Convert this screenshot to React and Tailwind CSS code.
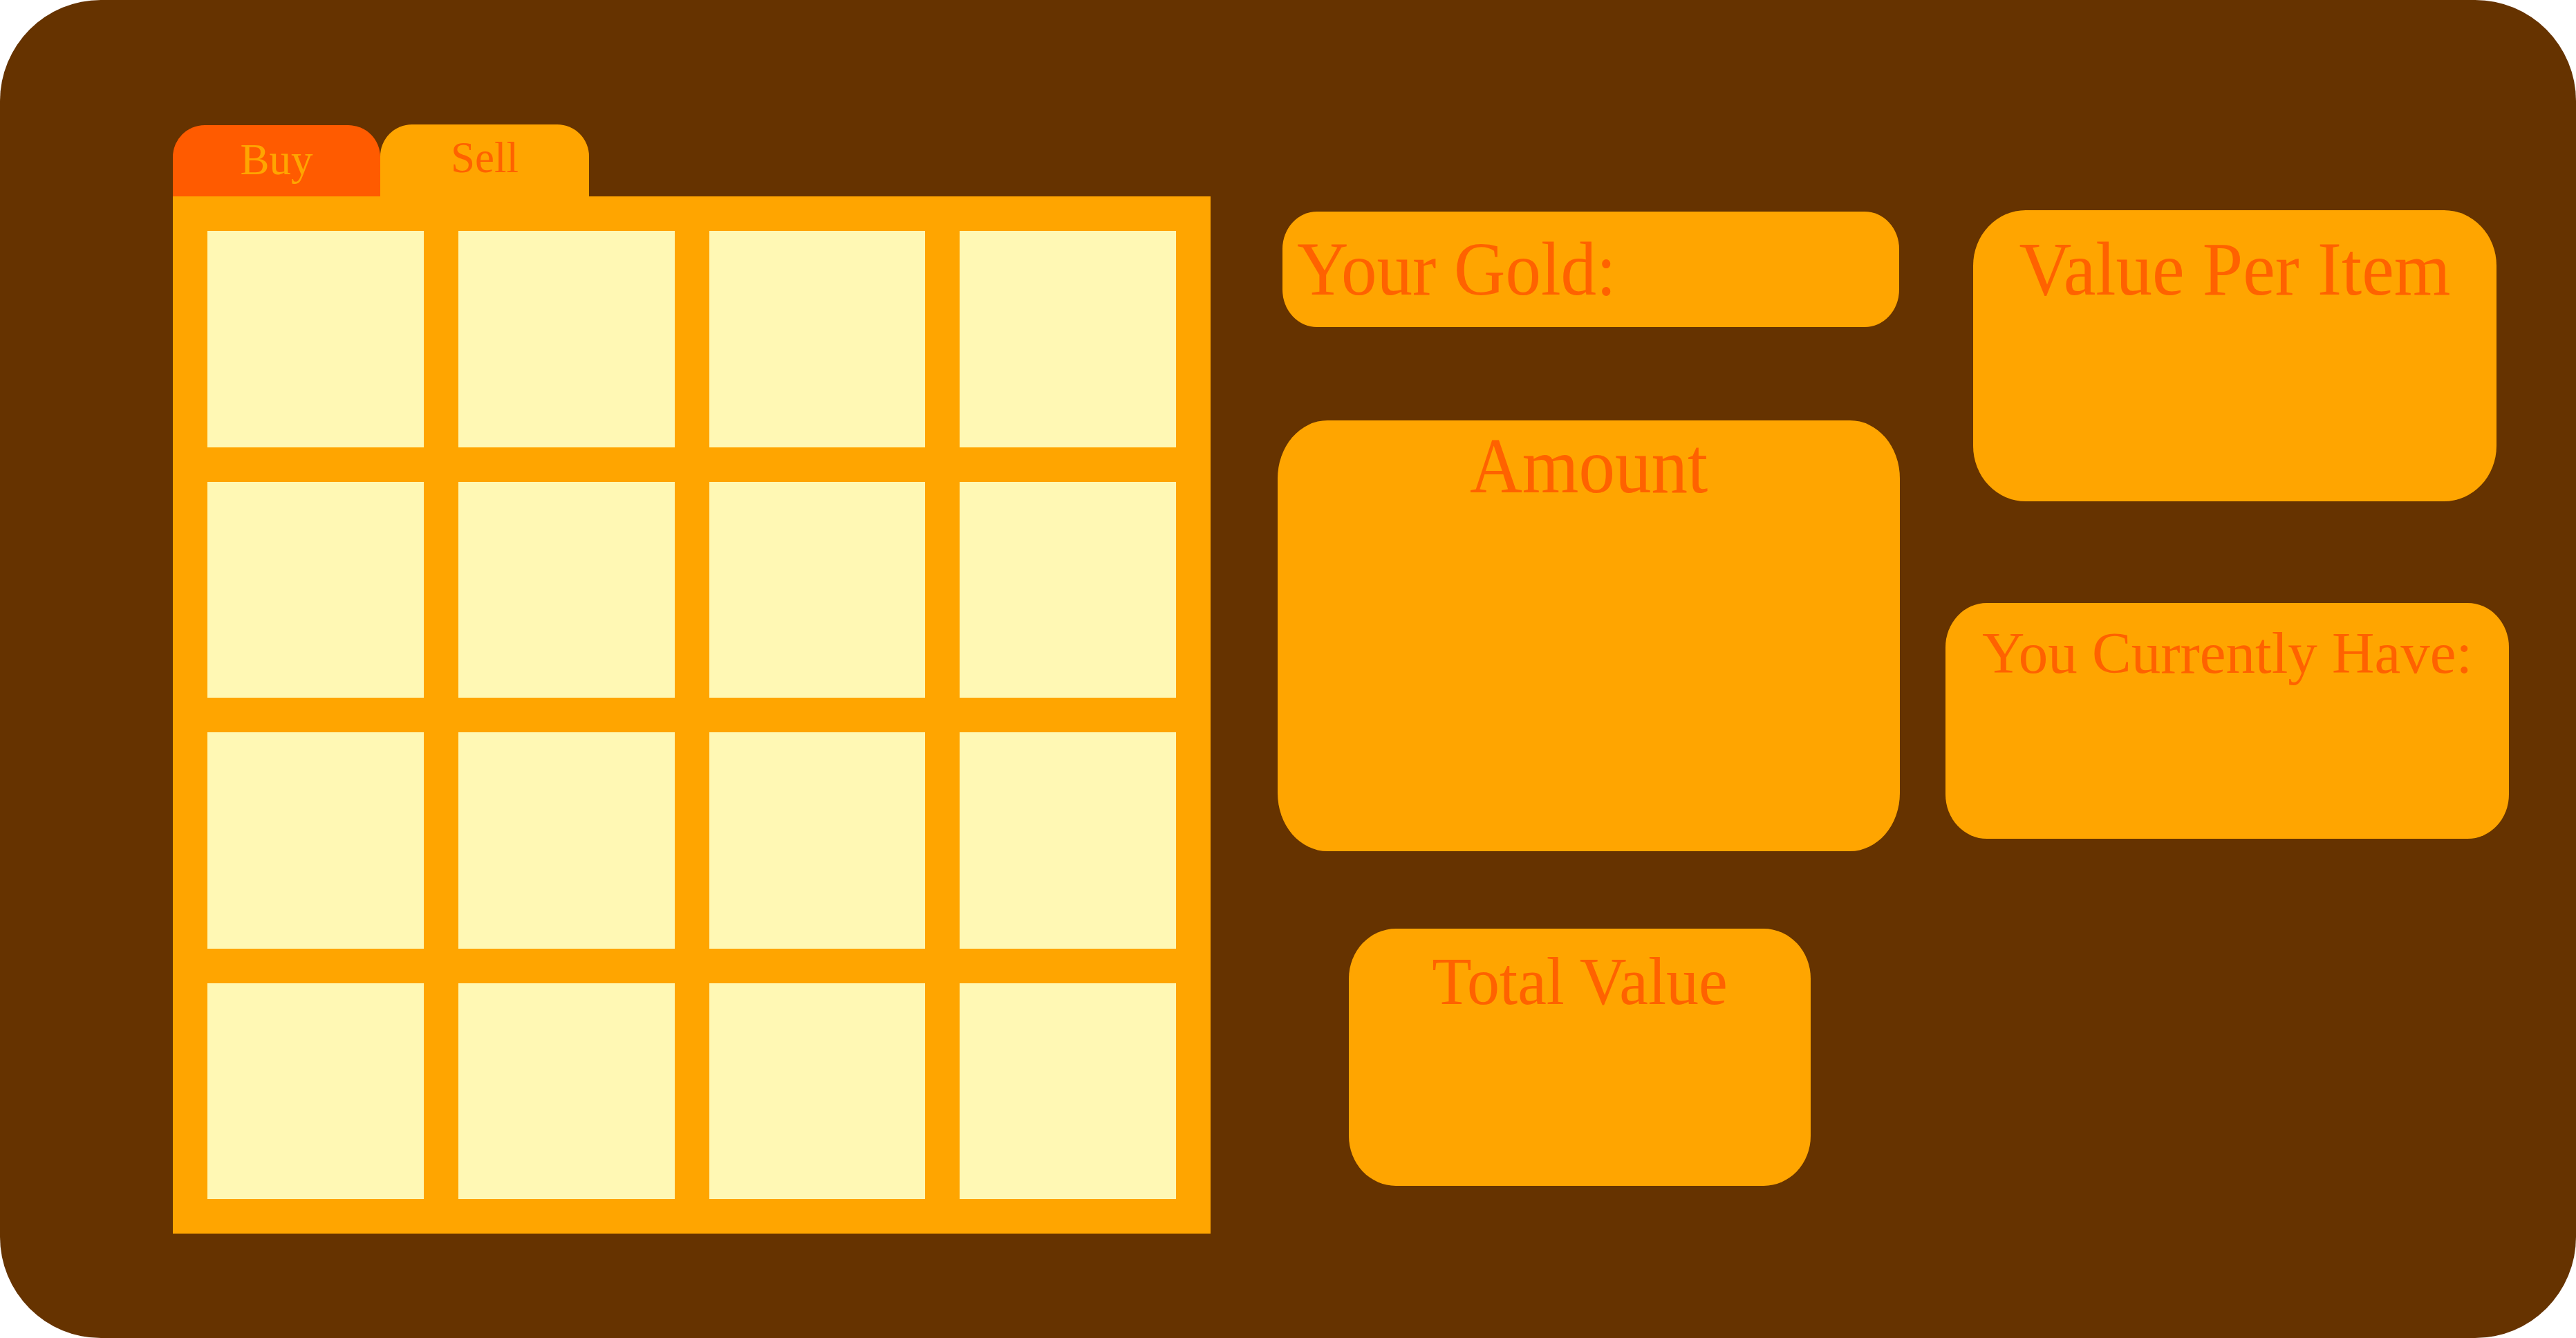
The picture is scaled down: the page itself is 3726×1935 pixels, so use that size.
import React from "react";

const serif = { fontFamily: "'Liberation Serif', 'Times New Roman', serif" };

function Box({ className, label, textClass }) {
  return (
    <div className={`bg-[#ffa500] ${className}`}>
      <div className={`leading-none text-[#ff6200] whitespace-nowrap ${textClass}`}>{label}</div>
    </div>
  );
}

export default function App() {
  const cells = Array.from({ length: 16 });
  return (
    <div className="w-[3726px] h-[1935px] bg-white" style={serif}>
      <div className="w-[3726px] h-[1935px] rounded-[146px] bg-[#663300] flex items-start pl-[250px] overflow-hidden">
        {/* Left: tabs + inventory grid */}
        <div className="mt-[181px] w-[1501px] flex flex-col">
          <div className="flex items-end h-[103px]">
            <div className="w-[300px] h-[103px] rounded-t-[46px] bg-[#ff5b00] flex justify-center pt-[19px]">
              <span className="text-[63px] leading-none text-[#ffa500]">Buy</span>
            </div>
            <div className="w-[302px] h-[104px] rounded-t-[46px] bg-[#ffa500] flex justify-center pt-[17px]">
              <span className="text-[63px] leading-none text-[#ff6200]">Sell</span>
            </div>
          </div>
          <div className="w-[1501px] h-[1500px] bg-[#ffa500] p-[50px] grid grid-cols-4 grid-rows-4 gap-[50px]">
            {cells.map((_, i) => (
              <div key={i} className="bg-[#fff8b4]" />
            ))}
          </div>
        </div>

        {/* Middle column */}
        <div className="ml-[97px] mt-[306px] w-[900px] flex flex-col items-start">
          <Box
            className="ml-[7px] w-[892px] h-[167px] rounded-[50px/54px] pt-[28px] pl-[21px]"
            label="Your Gold:"
            textClass="text-[103px] origin-top scale-y-[1.07]"
          />
          <Box
            className="mt-[135px] w-[900px] h-[623px] rounded-[72px/84px] pt-[9px] text-center"
            label="Amount"
            textClass="text-[105px] origin-top scale-y-[1.08]"
          />
          <Box
            className="mt-[112px] ml-[103px] w-[668px] h-[372px] rounded-[68px/72px] pt-[28px] text-center"
            label="Total Value"
            textClass="text-[94px] origin-top scale-y-[1.03]"
          />
        </div>

        {/* Right column */}
        <div className="ml-[66px] mt-[304px] w-[815px] flex flex-col items-start">
          <Box
            className="ml-[40px] w-[757px] h-[421px] rounded-[76px/80px] pt-[30px] text-center"
            label="Value Per Item"
            textClass="text-[105px] origin-top scale-y-[1.05]"
          />
          <Box
            className="mt-[147px] w-[815px] h-[341px] rounded-[60px/64px] pt-[30px] text-center"
            label="You Currently Have:"
            textClass="text-[85px]"
          />
        </div>
      </div>
    </div>
  );
}
